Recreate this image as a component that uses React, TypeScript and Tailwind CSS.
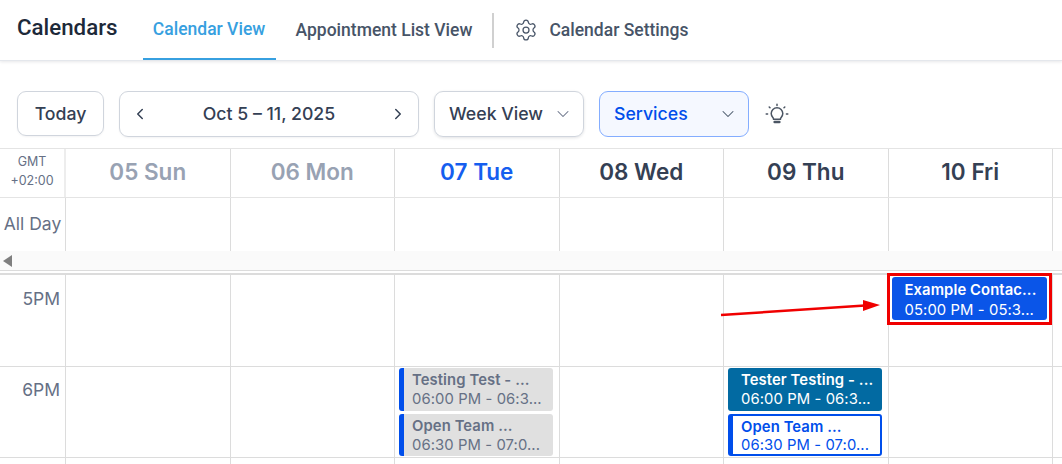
import type { ReactNode } from "react"
import { ChevronDown, ChevronLeft, ChevronRight, Settings } from "lucide-react"

const inter = "font-['Inter','Liberation_Sans',sans-serif]"
const roboto = "font-['Roboto','Liberation_Sans',sans-serif]"

const days = [
  { label: "05 Sun", color: "text-[#98a2b3]" },
  { label: "06 Mon", color: "text-[#98a2b3]" },
  { label: "07 Tue", color: "text-[#155eef]" },
  { label: "08 Wed", color: "text-[#344054]" },
  { label: "09 Thu", color: "text-[#344054]" },
  { label: "10 Fri", color: "text-[#344054]" },
]

const gridCols = "grid grid-cols-[66px_repeat(6,164.5px)_1fr]"

function EventCard({ title, time, className }: { title: string; time: string; className: string }) {
  return (
    <div className={`flex flex-col justify-center rounded-[3px] text-[14.8px] leading-[19px] tracking-[0.1px] ${className}`}>
      <div className="truncate font-semibold">{title}</div>
      <div className="truncate">{time}</div>
    </div>
  )
}

function Bulb() {
  return (
    <svg width="24" height="24" viewBox="0 0 24 24" fill="none" stroke="#4b5563" strokeWidth="1.5" strokeLinecap="round" className="mt-[12px] ml-[1px]">
      <path d="M8.6 16.2c0-1.6-2.4-2.6-2.4-5.6a5.8 5.8 0 0 1 11.6 0c0 3-2.4 4-2.4 5.6z" />
      <path d="M9.6 19h4.8" strokeWidth="2.4" />
      <path d="M12 1.2v1.2M4.2 4l.8.8M19.8 4l-.8.8M1.2 11h1.4M21.4 11h1.4" />
    </svg>
  )
}

function Row({ label, height, labelPad, children }: { label: string; height: string; labelPad: string; children?: ReactNode[] }) {
  return (
    <div className={`${gridCols} ${height} border-b border-[#dcdcdc]`}>
      <div className={`border-r border-[#dcdcdc] pr-[5px] text-right text-[17.5px] leading-5 text-[#667085] ${labelPad}`}>{label}</div>
      {days.map((d, i) => (
        <div key={d.label} className="relative border-r border-[#dcdcdc]">
          {children?.[i]}
        </div>
      ))}
    </div>
  )
}

export default function App() {
  return (
    <div className={`relative h-[464px] w-[1062px] overflow-hidden bg-white ${inter}`}>
      <header className={`flex h-[61px] items-center border-b border-[#e4e7ec] pl-[17px] shadow-[0_1px_3px_rgba(16,24,40,0.1)] ${roboto}`}>
        <h1 className="mb-[4px] text-[22.3px] font-medium text-[#1d2939]">Calendars</h1>
        <nav className="ml-[25px] flex h-full items-stretch text-[17.5px] font-medium">
          <div className="flex w-[133px] items-center justify-center border-b-[2px] border-[#37a0e0] text-[#37a0e0]">Calendar View</div>
          <div className="ml-[20px] flex items-center text-[#475467]">Appointment List View</div>
        </nav>
        <div className="ml-[20px] h-[35px] w-[2px] bg-[#d0d0d0]" />
        <div className="ml-[20px] flex items-center gap-[11px] text-[17.5px] font-medium text-[#475467]">
          <Settings size={24} strokeWidth={1.25} />
          <span>Calendar Settings</span>
        </div>
      </header>

      <div className="flex h-[87px] items-start gap-[15px] pt-[30px] pl-[17px] text-[17.7px] font-medium text-[#344054]">
        <button className="h-[45px] w-[87px] rounded-[9px] border border-[#d0d5dd] pt-[1px] shadow-[0_1px_2px_rgba(16,24,40,0.05)]">Today</button>
        <div className="flex h-[46px] w-[300px] items-center justify-between rounded-[9px] border border-[#d0d5dd] px-[11px] shadow-[0_1px_2px_rgba(16,24,40,0.05)]">
          <ChevronLeft size={18} />
          <span>Oct 5 – 11, 2025</span>
          <ChevronRight size={18} />
        </div>
        <div className="flex h-[46px] w-[150px] items-center justify-between rounded-[9px] border border-[#d0d5dd] pr-[10px] pl-[14px] shadow-[0_1px_3px_rgba(16,24,40,0.12)]">
          <span>Week View</span>
          <ChevronDown size={20} strokeWidth={1.25} className="text-[#667085]" />
        </div>
        <div className="flex h-[46px] w-[150px] items-center justify-between rounded-[9px] border border-[#84adff] bg-[#f5f8ff] pr-[10px] pl-[14px] text-[#004eeb]">
          <span>Services</span>
          <ChevronDown size={20} strokeWidth={1.25} className="text-[#475467]" />
        </div>
        <Bulb />
      </div>

      <div className={`${gridCols} h-[50px] border-y border-[#e4e4e4]`}>
        <div className="flex -translate-x-[0.5px] flex-col items-center justify-center border-r border-[#dcdcdc] pb-[5px] text-[12.5px] leading-[19px] text-[#667085]">
          <span>GMT</span>
          <span>+02:00</span>
        </div>
        {days.map((d) => (
          <div key={d.label} className={`flex items-center justify-center border-r border-[#dcdcdc] pb-[2px] text-[22.5px] font-semibold ${d.color}`}>
            {d.label}
          </div>
        ))}
      </div>

      <div className={`${gridCols} h-[53px]`}>
        <div className="flex items-center justify-center border-r border-[#dcdcdc] text-[17.5px] text-[#667085]">All Day</div>
        {days.map((d) => (
          <div key={d.label} className="border-r border-[#dcdcdc]" />
        ))}
      </div>

      <div className="flex h-[20px] items-center border-b border-[#dcdcdc] bg-[#fafafa] pl-[3px]">
        <div className="h-0 w-0 border-y-[6px] border-r-[9px] border-y-transparent border-r-[#7f7f7f]" />
      </div>
      <div className="h-[4px] border-b-[2px] border-[#dcdcdc]" />

      <Row
        label="5PM"
        height="h-[92px]"
        labelPad="pt-[14px]"
        children={[
          null,
          null,
          null,
          null,
          null,
          <EventCard
            key="contact"
            title="Example Contac..."
            time="05:00 PM - 05:3..."
            className="absolute top-[2px] left-[3px] h-[43px] w-[155px] gap-px bg-[#0a55e8] pt-[4px] pr-1 pl-[13px] text-white"
          />,
        ]}
      />
      <Row
        label="6PM"
        height="h-[91px]"
        labelPad="pt-[13px]"
        children={[
          null,
          null,
          <div key="tue" className="absolute top-[1px] left-[4px] flex w-[154px] flex-col gap-[3px] text-[#667085]">
            <EventCard title="Testing Test - ..." time="06:00 PM - 06:3..." className="h-[43px] border-l-[5px] border-[#004eeb] bg-[#e0e0e0] pt-[1px] pl-[8px]" />
            <EventCard title="Open Team ..." time="06:30 PM - 07:0..." className="h-[42px] border-l-[5px] border-[#004eeb] bg-[#e0e0e0] pt-[2px] pl-[8px]" />
          </div>,
          null,
          <div key="thu" className="absolute top-[1px] left-[4px] flex w-[154px] flex-col gap-[3px]">
            <EventCard title="Tester Testing - ..." time="06:00 PM - 06:3..." className="h-[43px] bg-[#026aa2] pt-[1px] pl-[13px] text-white" />
            <EventCard title="Open Team ..." time="06:30 PM - 07:0..." className="h-[42px] border-2 border-l-[5px] border-[#004eeb] bg-white pt-[2px] pl-[8px] text-[#004eeb]" />
          </div>,
          null,
        ]}
      />
      <Row label="" height="h-[20px]" labelPad="pt-0" />

      {/* annotation from the screenshot: red box and arrow */}
      <div className="pointer-events-none absolute top-[273px] left-[887px] h-[52px] w-[165px] border-[3px] border-[#f00000]" />
      <svg className="pointer-events-none absolute top-[295px] left-[715px]" width="170" height="25" viewBox="0 0 170 25">
        <path d="M6 20 L150 10.5" stroke="#f00000" strokeWidth="2.5" />
        <path d="M148 5 L165 10 L148 16 Z" fill="#f00000" />
      </svg>
    </div>
  )
}
